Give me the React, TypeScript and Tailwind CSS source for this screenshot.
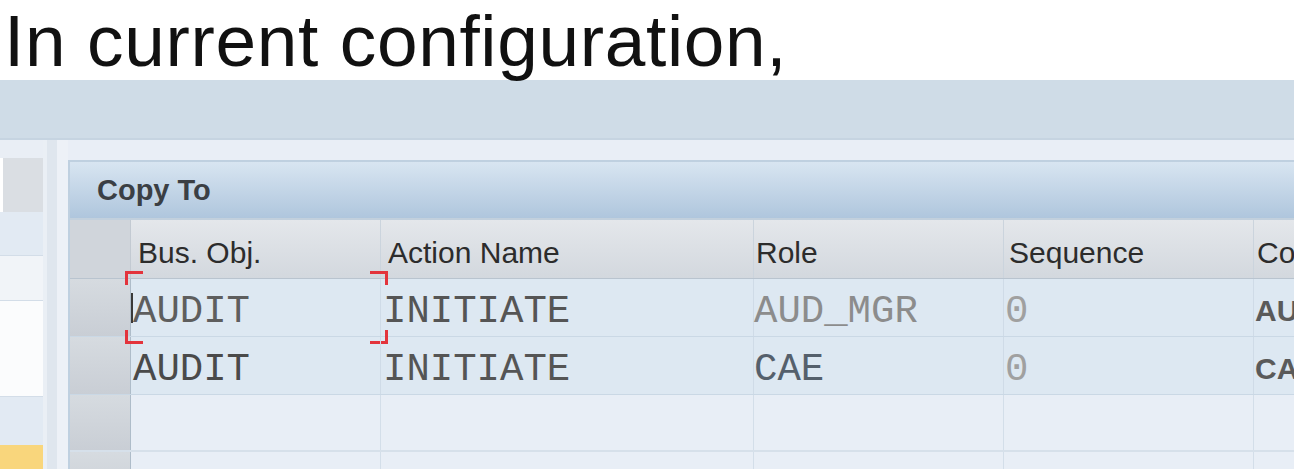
import React from "react";

const cols = "grid grid-cols-[61px_250px_373px_250px_250px_300px]";

type Row = { obj: string; action: string; role: string; seq: string; co: string; roleTone: string };

const rows: Row[] = [
  { obj: "AUDIT", action: "INITIATE", role: "AUD_MGR", seq: "0", co: "AUDIT", roleTone: "text-[#8c8c8c]" },
  { obj: "AUDIT", action: "INITIATE", role: "CAE", seq: "0", co: "CAE", roleTone: "text-[#55606c]" },
];

function Brackets() {
  return (
    <>
      <span className="absolute left-[-6px] top-[-8px] h-[14px] w-[18px] border-l-[3px] border-t-[3px] border-[#e3343c]" />
      <span className="absolute left-[-6px] bottom-[-8px] h-[14px] w-[18px] border-l-[3px] border-b-[3px] border-[#e3343c]" />
      <span className="absolute right-[-8px] top-[-8px] h-[14px] w-[18px] border-r-[3px] border-t-[3px] border-[#e3343c]" />
      <span className="absolute right-[-8px] bottom-[-8px] h-[14px] w-[18px] border-r-[3px] border-b-[3px] border-[#e3343c]" />
      {/* caret */}
      <span className="absolute left-[0px] top-[14px] h-[30px] w-[2px] bg-[#3a3a3a]" />
    </>
  );
}

export default function App() {
  const mono = "font-['Liberation_Mono',monospace] text-[39px] leading-none pt-[9px]";
  const sans = "font-['Liberation_Sans',Arial,sans-serif]";

  return (
    <div className={`h-[469px] w-[1294px] overflow-hidden bg-white ${sans}`}>
      {/* Title */}
      <h1 className="h-[80px] pl-[4px] pt-[3px] text-[73px] leading-[76px] tracking-[0.65px] text-[#111]">
        In current configuration,
      </h1>

      {/* Toolbar strip */}
      <div className="h-[60px] border-b-2 border-[#c6d4e1] bg-[#cfdce7]" />

      <div className="flex h-[329px]">
        {/* Left list */}
        <div className="flex w-[43px] flex-col">
          <div className="h-[18px] bg-[#e9eef5]" />
          <div className="ml-[3px] h-[54px] bg-[#dadee3]" />
          <div className="h-[44px] border-b border-[#d3dde8] bg-[#e2eaf3]" />
          <div className="h-[45px] border-b border-[#d3dde8] bg-[#f1f4f8]" />
          <div className="h-[96px] border-b border-[#d3dde8] bg-[#fbfcfd]" />
          <div className="h-[48px] bg-[#e2eaf3]" />
          <div className="flex-1 bg-[#f9d67c]" />
        </div>

        {/* Splitter */}
        <div className="flex w-[25px]">
          <div className="w-[4px] bg-[#eaeff5]" />
          <div className="w-[10px] bg-[#dfe6ee]" />
          <div className="flex-1 bg-[#edf1f7]" />
        </div>

        {/* Panel */}
        <div className="flex min-w-0 flex-1 flex-col bg-[#e9eef6]">
          <div className="h-[20px] shrink-0" />
          <div className="flex flex-1 flex-col border-l-2 border-t-2 border-[#bfd0e0]">
            <div className="flex h-[58px] shrink-0 items-center border-b-2 border-[#c2d0dd] bg-gradient-to-b from-[#d8e5f1] to-[#afc6dd] pl-[27px] pt-[2px] text-[29px] font-bold text-[#3b3f44]">
              Copy To
            </div>

            {/* Header row */}
            <div className={`${cols} h-[59px] shrink-0 border-b border-[#b9c4cf] bg-gradient-to-b from-[#e4e7eb] to-[#d3d8de] text-[30px] text-[#2c2c2c]`}>
              <div className="border-r border-[#c3cad2] bg-[#d0d5db]" />
              <div className="flex items-center border-r border-[#cbd4dd] pl-[7px] pt-[6px]">Bus. Obj.</div>
              <div className="flex items-center border-r border-[#cbd4dd] pl-[7px] pt-[6px]">Action Name</div>
              <div className="flex items-center border-r border-[#cbd4dd] pl-[2px] pt-[6px]">Role</div>
              <div className="flex items-center border-r border-[#cbd4dd] pl-[5px] pt-[6px]">Sequence</div>
              <div className="flex items-center pl-[3px] pt-[6px]">Co</div>
            </div>

            {rows.map((r, i) => (
              <div key={i} className={`${cols} h-[58px] shrink-0 border-b border-[#cad8e5] bg-[#dde8f2]`}>
                <div className="border-r border-[#aebcc9] bg-gradient-to-b from-[#d6dbe0] to-[#c9ced5]" />
                <div className={`relative flex items-center border-r border-[#cfdbe7] pl-[2px] ${mono} ${i === 0 ? "text-[#5e5e5e]" : "text-[#4a4a4a]"}`}>
                  {r.obj}
                  {i === 0 && <Brackets />}
                </div>
                <div className={`flex items-center border-r border-[#cfdbe7] pl-[2px] ${mono} text-[#555]`}>{r.action}</div>
                <div className={`flex items-center border-r border-[#cfdbe7] pl-0 ${mono} ${r.roleTone}`}>{r.role}</div>
                <div className={`flex items-center border-r border-[#cfdbe7] pl-[1px] ${mono} text-[#a0a0a0]`}>{r.seq}</div>
                <div className="flex items-center pl-[1px] pt-[6px] text-[30px] font-bold text-[#5a5a5a]">{r.co}</div>
              </div>
            ))}

            {[0, 1].map((k) => (
              <div key={k} className={`${cols} h-[57px] shrink-0 border-b-2 border-[#d6e0ea] bg-[#e8eef6]`}>
                <div className="border-r border-[#aebcc9] bg-gradient-to-b from-[#d6dbe0] to-[#c9ced5]" />
                <div className="border-r border-[#d3dee9]" />
                <div className="border-r border-[#d3dee9]" />
                <div className="border-r border-[#d3dee9]" />
                <div className="border-r border-[#d3dee9]" />
                <div />
              </div>
            ))}
          </div>
        </div>
      </div>
    </div>
  );
}
